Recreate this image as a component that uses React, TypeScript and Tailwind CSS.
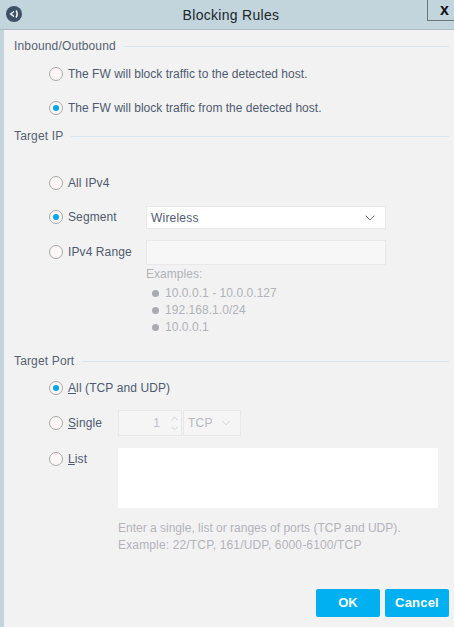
import { ChevronDown, ChevronUp } from "lucide-react";

function Radio({ checked, label, hotkey, rest, tight }: { checked?: boolean; label?: string; hotkey?: string; rest?: string; tight?: boolean }) {
  return (
    <div className="flex items-center gap-[5px]">
      <span className="flex h-[14px] w-[14px] shrink-0 items-center justify-center rounded-full border border-[#a9a9a9] bg-[#fdf6f6]">
        {checked && <span className="h-[6px] w-[6px] rounded-full bg-[#00a8f0]" />}
      </span>
      <span className={tight ? "whitespace-nowrap text-[12px] tracking-[0.02px] text-[#4f5a70]" : "whitespace-nowrap text-[12px] tracking-[0.1px] text-[#4f5a70]"}>
        {hotkey && <span className="underline">{hotkey}</span>}
        {rest}
        {label}
      </span>
    </div>
  );
}

function SectionTitle({ title }: { title: string }) {
  return (
    <div className="flex h-[18px] items-center gap-2 pr-[5px]">
      <span className="text-[12px] tracking-[0.15px] text-[#566273]">{title}</span>
      <span className="mt-[1px] h-px flex-1 bg-[#d6e6f2]" />
    </div>
  );
}

export default function App() {
  return (
    <div className="relative flex h-[627px] w-[454px] flex-col overflow-hidden bg-[#c3d5dc] font-['Liberation_Sans',Arial,sans-serif]">
      <header className="flex h-[30px] shrink-0 items-center justify-center border-b border-[#aebcc2]">
        <div className="absolute left-[6px] top-[6px] flex h-[16px] w-[16px] items-center justify-center rounded-full bg-[#3f5166]">
          <svg width="12" height="12" viewBox="0 0 12 12" fill="none" stroke="white">
            <path d="M6 3.4 2.6 6 6 8.6" strokeWidth="1.3" />
            <path d="M8 2.6C9.5 4.4 9.5 7.6 8 9.4" strokeWidth="1.5" />
          </svg>
        </div>
        <h1 className="pt-[1px] pl-[8px] text-[14px] font-normal tracking-[0.3px] text-[#20262c]">Blocking Rules</h1>
        <div className="absolute right-0 top-0 flex h-[21px] w-[27px] items-center justify-center border-b border-l border-[#6f7478] pl-[7px] text-[16px] font-bold text-[#111]">
          x
        </div>
      </header>

      <main className="ml-[4px] flex min-h-0 flex-1 flex-col bg-[#f2f2f2] pl-[10px] pt-[7px]">
        <SectionTitle title="Inbound/Outbound" />
        <div className="mt-[10px] flex flex-col gap-[20px] pl-[35px]">
          <div className="h-[14px]"><Radio tight label="The FW will block traffic to the detected host." /></div>
          <div className="h-[14px]"><Radio tight checked label="The FW will block traffic from the detected host." /></div>
        </div>

        <div className="mt-[14px]">
          <SectionTitle title="Target IP" />
        </div>
        <div className="mt-[31px] pl-[35px]">
          <div className="flex h-[14px] items-center"><Radio label="All IPv4" /></div>
          <div className="mt-[20px] flex h-[14px] items-center">
            <div className="w-[97px]"><Radio checked label="Segment" /></div>
            <div className="mt-[1px] flex h-[23px] w-[240px] items-center justify-between border border-[#e8e8e8] bg-white pl-[4px] pr-[7px] text-[12px] tracking-[0.2px] text-[#4f5a70]">
              Wireless
              <ChevronDown size={16} strokeWidth={1.25} className="text-[#44566c]" />
            </div>
          </div>
          <div className="mt-[21px] flex h-[14px] items-center">
            <div className="w-[97px]"><Radio label="IPv4 Range" /></div>
            <div className="h-[25px] w-[240px] border border-[#e8e8e8] bg-[#f7f7f7]" />
          </div>
          <div className="ml-[97px] mt-[8px] text-[12px] tracking-[0.05px] text-[#b0b2b8]">
            <div className="leading-[14px]">Examples:</div>
            <ul className="mt-[5px] flex flex-col gap-[3px] pl-[6px]">
              {["10.0.0.1 - 10.0.0.127", "192.168.1.0/24", "10.0.0.1"].map((item) => (
                <li key={item} className="flex h-[14px] items-center gap-[6px] leading-[14px]">
                  <span className="h-[7px] w-[7px] rounded-full bg-[#a9abb0]" />
                  {item}
                </li>
              ))}
            </ul>
          </div>
        </div>

        <div className="mt-[18px]">
          <SectionTitle title="Target Port" />
        </div>
        <div className="mt-[11px] pl-[35px]">
          <div className="flex h-[14px] items-center"><Radio checked hotkey="A" rest="ll (TCP and UDP)" /></div>
          <div className="mt-[21px] flex h-[14px] items-center">
            <div className="w-[69px]"><Radio hotkey="S" rest="ingle" /></div>
            <div className="flex h-[26px] w-[64px] items-center justify-end border border-[#e8e8e8] bg-[#f5f5f5] pr-[1px] text-[12px] text-[#c0c0c8]">
              <span className="mr-[9px]">1</span>
              <div className="flex flex-col text-[#b8b8b8]">
                <ChevronUp size={11} strokeWidth={1.25} className="-mb-[1px]" />
                <ChevronDown size={11} strokeWidth={1.25} />
              </div>
            </div>
            <div className="ml-px flex h-[26px] w-[58px] items-center gap-[4px] border border-[#e8e8e8] bg-[#f5f5f5] pl-[4px] text-[12px] tracking-[0.2px] text-[#b8b8be]">
              TCP
              <ChevronDown size={14} strokeWidth={1.25} className="ml-[2px] text-[#c4c4c4]" />
            </div>
          </div>
          <div className="mt-[20px] flex items-start">
            <div className="w-[69px]"><Radio hotkey="L" rest="ist" /></div>
            <div className="-mt-[2px] h-[60px] w-[320px] bg-white" />
          </div>
          <div className="ml-[69px] mt-[12px] text-[12px] leading-[17px] text-[#b2b2ba]">
            <div>Enter a single, list or ranges of ports (TCP and UDP).</div>
            <div className="tracking-[0.15px]">Example: 22/TCP, 161/UDP, 6000-6100/TCP</div>
          </div>
        </div>

        <div className="mt-auto mb-[10px] flex justify-end gap-[5px] pr-[5px]">
          <button className="h-[28px] w-[64px] rounded-[2px] bg-[#00b0f0] text-[13px] font-bold text-white">OK</button>
          <button className="h-[28px] w-[64px] rounded-[2px] bg-[#00b0f0] text-[13px] font-bold tracking-[0.2px] text-white">Cancel</button>
        </div>
      </main>
    </div>
  );
}
